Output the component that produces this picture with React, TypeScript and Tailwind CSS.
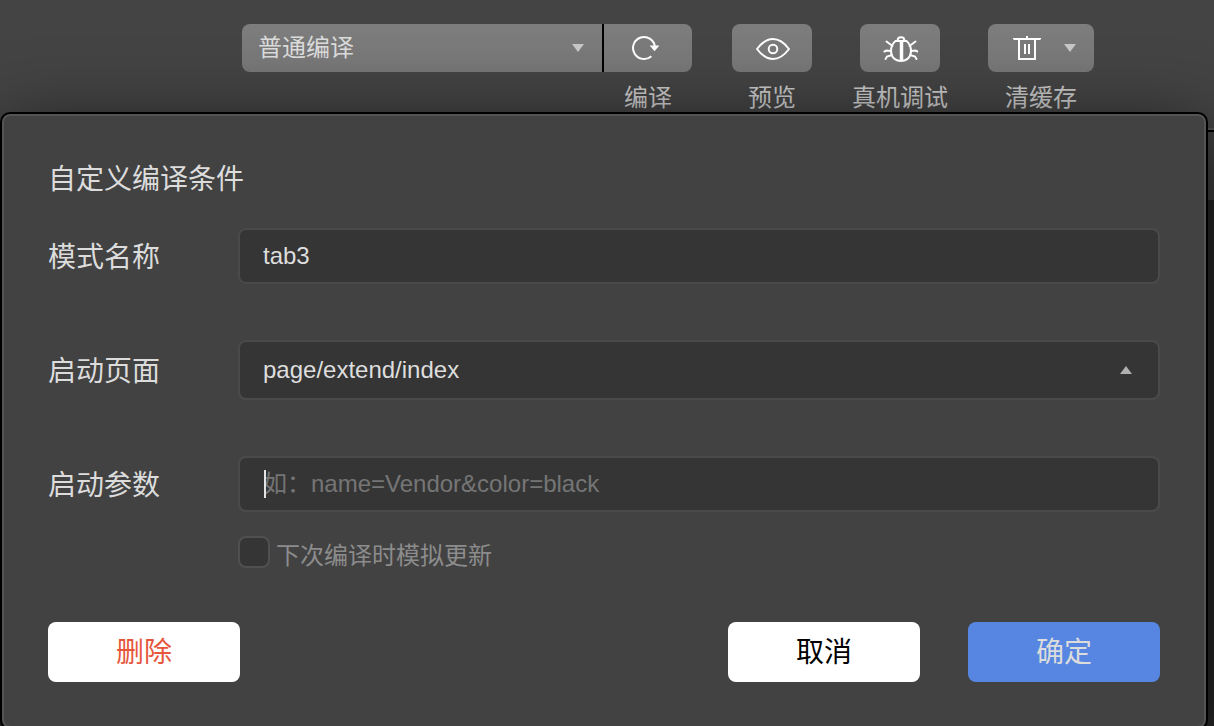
import { useState } from 'react';
import type { ReactNode } from 'react';

const triangles = {
  down: 'M0 0H12L6 8Z',
  up: 'M0 8H12L6 0Z',
};

function Triangle({ direction, className = '' }: { direction: 'up' | 'down'; className?: string }) {
  return (
    <svg width="12" height="8" viewBox="0 0 12 8" fill="currentColor" aria-hidden="true" className={className}>
      <path d={triangles[direction]} />
    </svg>
  );
}

function CompileIcon() {
  return (
    <svg width="34" height="26" viewBox="0 0 34 26" fill="none" stroke="white" strokeWidth="2" aria-hidden="true">
      <path d="M20.4 21.2A11 11 0 1 1 24 12" />
      <path d="M18.6 10.6H28.4L23.5 16.2Z" fill="white" stroke="none" />
    </svg>
  );
}

function EyeIcon() {
  return (
    <svg width="36" height="24" viewBox="0 0 36 24" fill="none" stroke="white" strokeWidth="2" aria-hidden="true">
      <path d="M3 13Q10.5 3 19 3T35 13Q27.5 23 19 23T3 13Z" strokeLinejoin="round" />
      <circle cx="19" cy="13" r="4.3" />
    </svg>
  );
}

function BugIcon() {
  return (
    <svg
      width="36"
      height="28"
      viewBox="0 0 36 28"
      fill="none"
      stroke="white"
      strokeWidth="2"
      strokeLinecap="round"
      aria-hidden="true"
    >
      <path d="M13.5 7H24.5C27.5 9.5 29 13 29 17C29 23 25 27 19 27S9 23 9 17C9 13 10.5 9.5 13.5 7Z" />
      <path d="M15.6 6.5C15.6 2 22.4 2 22.4 6.5" />
      <path d="M19.5 7V26.5" strokeWidth="3.5" strokeLinecap="butt" />
      <path d="M4.5 7.5L10.5 12M33.5 7.5L27.5 12" />
      <path d="M2.5 17.5L4.5 16.5L9 17M35.5 17.5L33.5 16.5L29 17" />
      <path d="M3.5 25L5 22.5L10 21M34.5 25L33 22.5L28 21" />
    </svg>
  );
}

function TrashIcon() {
  return (
    <svg width="28" height="26" viewBox="0 0 28 26" fill="none" stroke="white" strokeWidth="2" aria-hidden="true">
      <path d="M1 4.5V4H27V4.5M14 1V4" />
      <path d="M6 4V24H22V4" />
      <path d="M12 9V19M16 9V19" />
    </svg>
  );
}

function ToolButton({ label, face, children }: { label: string; face: string; children: ReactNode }) {
  return (
    <button type="button" className="flex flex-col items-center gap-2.5 text-2xl leading-8 text-[#cacaca]">
      <span className={`flex h-12 items-center bg-linear-to-b from-[#7d7d7d] to-[#777] ${face}`}>{children}</span>
      <span>{label}</span>
    </button>
  );
}

function Toolbar() {
  return (
    <header className="flex items-start gap-10 border-b-2 border-black bg-[#444] pt-6 pr-6 pb-4 pl-[242px] inset-shadow-[0_-2px_0_#555]">
      <div className="flex items-start">
        <div className="relative w-[362px]">
          <select
            aria-label="编译模式"
            className="h-12 w-full appearance-none rounded-l-lg border-r-2 border-black bg-linear-to-b from-[#7d7d7d] to-[#777] pl-4 text-2xl text-[#dcdcdc] outline-none"
          >
            <option>普通编译</option>
          </select>
          <Triangle direction="down" className="pointer-events-none absolute top-5 right-5 text-[#c8c8c8]" />
        </div>
        <ToolButton label="编译" face="w-[88px] justify-center rounded-r-lg">
          <CompileIcon />
        </ToolButton>
      </div>
      <ToolButton label="预览" face="w-20 justify-center rounded-lg">
        <EyeIcon />
      </ToolButton>
      <ToolButton label="真机调试" face="w-20 justify-center rounded-lg">
        <BugIcon />
      </ToolButton>
      <ToolButton label="清缓存" face="w-[106px] justify-between rounded-lg pr-[18px] pl-[25px]">
        <TrashIcon />
        <Triangle direction="down" className="text-[#c8c8c8]" />
      </ToolButton>
    </header>
  );
}

const fieldClass =
  'w-full appearance-none rounded-lg border-2 border-[#4a4a4a] bg-[#353535] px-[23px] text-2xl text-[#dedede] outline-none placeholder:text-[#757575]';

function Field({ id, label, children }: { id: string; label: string; children: ReactNode }) {
  return (
    <div className="flex items-center">
      <label htmlFor={id} className="w-[190px] shrink-0 pt-1 text-[28px] leading-10">
        {label}
      </label>
      <div className="relative flex-1">{children}</div>
    </div>
  );
}

function CompileDialog() {
  const [name, setName] = useState('tab3');
  const [query, setQuery] = useState('');

  return (
    <form
      role="dialog"
      aria-labelledby="dialog-title"
      onSubmit={(e) => e.preventDefault()}
      className="absolute top-28 right-1.5 left-0 rounded-[10px] border-2 border-black bg-[#424242] px-[46px] py-[46px] text-[#dcdcdc] shadow-[0_20px_80px_rgba(0,0,0,0.7)] inset-ring-2 inset-ring-[#545454]"
    >
      <h1 id="dialog-title" className="text-[28px] leading-10">
        自定义编译条件
      </h1>

      <div className="mt-7 flex flex-col gap-14">
        <Field id="mode-name" label="模式名称">
          <input
            id="mode-name"
            type="text"
            value={name}
            onChange={(e) => setName(e.target.value)}
            className={`block h-14 ${fieldClass}`}
          />
        </Field>
        <Field id="start-page" label="启动页面">
          <select id="start-page" className={`block h-15 ${fieldClass}`}>
            <option>page/extend/index</option>
          </select>
          <Triangle direction="up" className="pointer-events-none absolute top-[26px] right-7 text-[#b0b0b0]" />
        </Field>
        <Field id="start-query" label="启动参数">
          <input
            id="start-query"
            type="text"
            value={query}
            onChange={(e) => setQuery(e.target.value)}
            placeholder="如：name=Vendor&color=black"
            className={`block h-14 caret-transparent ${fieldClass}`}
          />
          {query === '' && <span className="absolute top-3.5 left-[26px] h-7 w-0.5 bg-[#e4e4e4]" />}
        </Field>
      </div>

      <div className="mt-6 flex items-start gap-1.5 pl-[190px]">
        <input
          id="simulate-update"
          type="checkbox"
          className="size-8 appearance-none rounded-lg border-2 border-[#505050] bg-[#353535] checked:bg-[#5686e1]"
        />
        <label htmlFor="simulate-update" className="text-2xl leading-10 text-[#8c8c8c]">
          下次编译时模拟更新
        </label>
      </div>

      <div className="mt-[46px] flex gap-12 text-[28px]">
        <button type="button" className="mr-auto h-15 w-48 rounded-lg bg-white pt-0.5 text-[#e6563c]">
          删除
        </button>
        <button type="button" className="h-15 w-48 rounded-lg bg-white pt-0.5 text-black">
          取消
        </button>
        <button type="submit" className="h-15 w-48 rounded-lg bg-[#5686e1] pt-0.5">
          确定
        </button>
      </div>
    </form>
  );
}

export default function App() {
  return (
    <div className="relative flex h-screen flex-col overflow-hidden bg-[#282828] font-['Liberation_Sans','Noto_Sans_CJK_SC',sans-serif]">
      <Toolbar />
      <div className="h-[68px] bg-[#404040]" />
      <CompileDialog />
    </div>
  );
}
